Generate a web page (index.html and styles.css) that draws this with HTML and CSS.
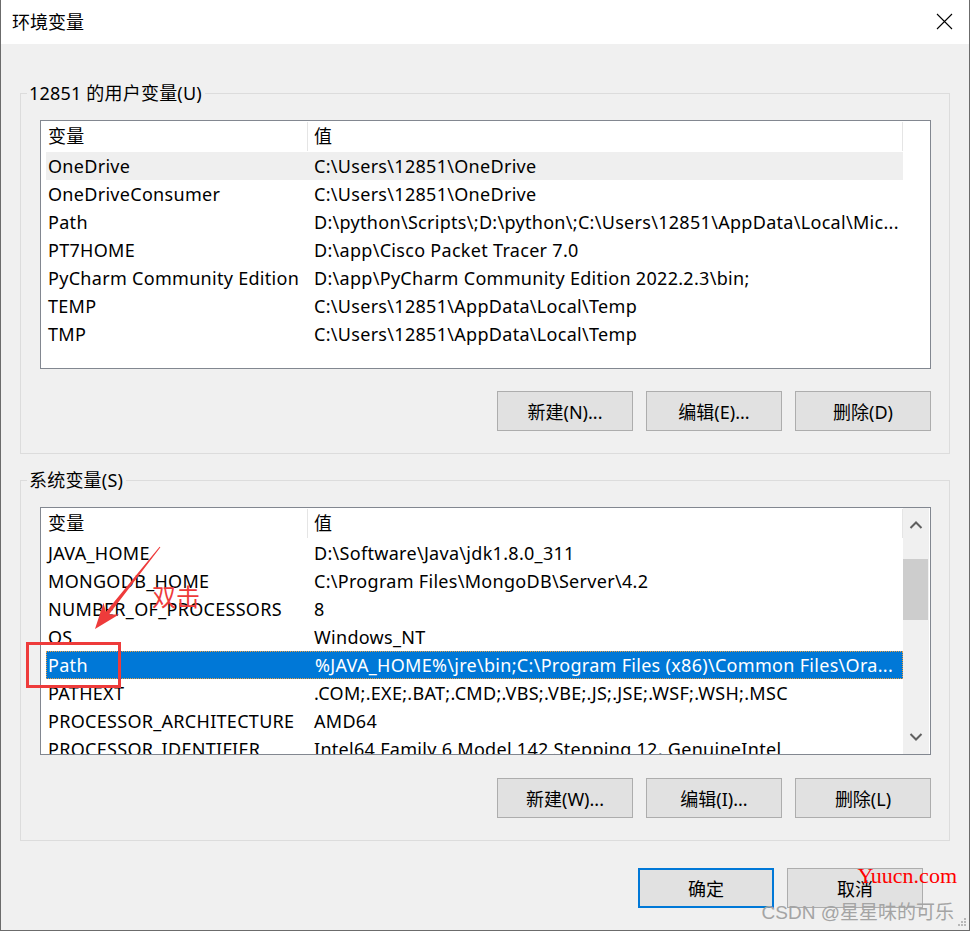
FILE: index.html
```html
<!DOCTYPE html>
<html lang="zh-CN">
<head>
    <meta charset="UTF-8">
    <meta name="viewport" content="width=device-width, initial-scale=1.0">
    <title>环境变量</title>
    <link rel="stylesheet" href="styles.css">
</head>
<body>
    <div class="window">
        <div class="titlebar">
            <span class="title">环境变量</span>
            <svg class="close" width="17" height="17" viewBox="0 0 17 17">
                <path d="M1 1 L16 16 M16 1 L1 16" stroke="#000" stroke-width="1.1" fill="none"/>
            </svg>
        </div>

        <div class="dialog">
            <section class="group">
                <div class="group-title">12851 的用户变量(U)</div>
                <div class="list list-user">
                    <div class="list-main">
                        <div class="row head"><span class="name">变量</span><span class="value">值</span></div>
                        <div class="row inactive"><span class="name">OneDrive</span><span class="value">C:\Users\12851\OneDrive</span></div>
                        <div class="row"><span class="name">OneDriveConsumer</span><span class="value">C:\Users\12851\OneDrive</span></div>
                        <div class="row"><span class="name">Path</span><span class="value">D:\python\Scripts\;D:\python\;C:\Users\12851\AppData\Local\Mic...</span></div>
                        <div class="row"><span class="name">PT7HOME</span><span class="value">D:\app\Cisco Packet Tracer 7.0</span></div>
                        <div class="row"><span class="name">PyCharm Community Edition</span><span class="value">D:\app\PyCharm Community Edition 2022.2.3\bin;</span></div>
                        <div class="row"><span class="name">TEMP</span><span class="value">C:\Users\12851\AppData\Local\Temp</span></div>
                        <div class="row"><span class="name">TMP</span><span class="value">C:\Users\12851\AppData\Local\Temp</span></div>
                    </div>
                    <div class="list-side"></div>
                </div>
                <div class="buttons">
                    <button class="btn">新建(N)...</button>
                    <button class="btn">编辑(E)...</button>
                    <button class="btn">删除(D)</button>
                </div>
            </section>

            <section class="group group-system">
                <div class="group-title">系统变量(S)</div>
                <div class="list list-system">
                    <div class="list-main">
                        <div class="row head"><span class="name">变量</span><span class="value">值</span></div>
                        <div class="row"><span class="name">JAVA_HOME</span><span class="value">D:\Software\Java\jdk1.8.0_311</span></div>
                        <div class="row"><span class="name">MONGODB_HOME</span><span class="value">C:\Program Files\MongoDB\Server\4.2</span></div>
                        <div class="row"><span class="name">NUMBER_OF_PROCESSORS</span><span class="value">8</span></div>
                        <div class="row"><span class="name">OS</span><span class="value">Windows_NT</span></div>
                        <div class="row selected"><span class="name">Path</span><span class="value">%JAVA_HOME%\jre\bin;C:\Program Files (x86)\Common Files\Ora...</span></div>
                        <div class="row"><span class="name">PATHEXT</span><span class="value">.COM;.EXE;.BAT;.CMD;.VBS;.VBE;.JS;.JSE;.WSF;.WSH;.MSC</span></div>
                        <div class="row"><span class="name">PROCESSOR_ARCHITECTURE</span><span class="value">AMD64</span></div>
                        <div class="row"><span class="name">PROCESSOR_IDENTIFIER</span><span class="value">Intel64 Family 6 Model 142 Stepping 12, GenuineIntel</span></div>
                    </div>
                    <div class="scrollbar">
                        <svg class="sb-arrow" width="14" height="10" viewBox="0 0 14 10"><path d="M1.5 8 L7 2.5 L12.5 8" stroke="#606060" stroke-width="2" fill="none"/></svg>
                        <div class="sb-track"><div class="sb-thumb"></div></div>
                        <svg class="sb-arrow" width="14" height="10" viewBox="0 0 14 10"><path d="M1.5 2 L7 7.5 L12.5 2" stroke="#606060" stroke-width="2" fill="none"/></svg>
                    </div>
                </div>
                <div class="buttons">
                    <button class="btn">新建(W)...</button>
                    <button class="btn">编辑(I)...</button>
                    <button class="btn">删除(L)</button>
                </div>
            </section>

            <div class="dialog-buttons">
                <button class="btn btn-default">确定</button>
                <button class="btn">取消</button>
            </div>
        </div>

        <svg class="annotation" width="970" height="931" viewBox="0 0 970 931">
            <rect x="27.5" y="643.5" width="92" height="43" fill="none" stroke="#ee3b3b" stroke-width="3"/>
            <polygon fill="#ee3b3b" points="160.4,547.3 159.6,546.7 105.8,612.1 103.6,602.8 95,629 119,614.5 109,614.5"/>
            <text x="152" y="606" class="note">双击</text>
        </svg>

        <div class="watermark">
            <span class="wm-site">Yuucn.com</span>
            <span class="wm-csdn">CSDN @星星味的可乐</span>
        </div>
        <svg class="grip" width="10" height="10" viewBox="0 0 10 10">
            <rect x="7" y="1" width="2" height="2" fill="#b8b8b8"/>
            <rect x="4" y="4" width="2" height="2" fill="#b8b8b8"/>
            <rect x="7" y="4" width="2" height="2" fill="#b8b8b8"/>
            <rect x="1" y="7" width="2" height="2" fill="#b8b8b8"/>
            <rect x="4" y="7" width="2" height="2" fill="#b8b8b8"/>
            <rect x="7" y="7" width="2" height="2" fill="#b8b8b8"/>
        </svg>
    </div>
</body>
</html>
```

FILE: styles.css
```css
body {
    margin: 0;
    background-color: #f0f0f0;
    font-family: "Noto Sans", "Noto Sans CJK SC", sans-serif;
    font-size: 18px;
    color: #000;
}
.window {
    position: relative;
    width: 970px;
    height: 931px;
    box-sizing: border-box;
    border-left: 1px solid #6b6b6b;
    border-right: 1px solid #6b6b6b;
    border-bottom: 1px solid #6b6b6b;
    background-color: #f0f0f0;
    overflow: hidden;
}
.titlebar {
    height: 44px;
    background-color: #fff;
    display: flex;
    align-items: center;
    justify-content: space-between;
    padding: 0 16px 0 11px;
}
.title {
    font-size: 18px;
    line-height: 22px;
}
.close {
    display: block;
    margin-top: -1px;
}
.dialog {
    display: flex;
    flex-direction: column;
    padding-top: 49px;
}
.group {
    margin: 0 19px;
    border: 1px solid #dcdcdc;
    padding: 0 18px 22px 19px;
}
.group-system {
    margin-top: 26px;
}
.group-title {
    width: fit-content;
    margin: -12px 0 0 -13px;
    padding: 0 3px 0 2px;
    background-color: #f0f0f0;
    font-size: 18px;
    line-height: 22px;
    letter-spacing: 0.2px;
}
.list {
    margin-top: 16px;
    border: 1px solid #828790;
    background-color: #fff;
    display: flex;
    overflow: hidden;
}
.list-user {
    height: 249px;
    box-sizing: border-box;
}
.list-system {
    height: 248px;
    box-sizing: border-box;
}
.list-main {
    flex: 1;
    padding-left: 5px;
    min-width: 0;
}
.list-side {
    width: 27px;
}
.row {
    display: flex;
    height: 28px;
    line-height: 28px;
    white-space: nowrap;
    letter-spacing: 0.3px;
}
.row .name {
    width: 262px;
    box-sizing: border-box;
    padding-left: 2px;
    overflow: hidden;
    flex-shrink: 0;
}
.row .value {
    flex: 1;
    padding-left: 6px;
    overflow: hidden;
}
.row.head {
    height: 31px;
    line-height: 31px;
}
.row.head .name,
.row.head .value {
    border-right: 1px solid #e5e5e5;
    margin: 1px 0;
    line-height: 29px;
}
.row.inactive {
    background-color: #efefef;
}
.row.selected {
    background-color: #0078d7;
    color: #fff;
    box-sizing: border-box;
    border: 1px dotted #f0a040;
    line-height: 26px;
}
.row.selected .name {
    padding-left: 1px;
}
.scrollbar {
    width: 26px;
    margin-right: 1px;
    background-color: #f0f0f0;
    display: flex;
    flex-direction: column;
    align-items: center;
}
.sb-arrow {
    display: block;
    margin: 12px 0;
}
.sb-track {
    flex: 1;
    align-self: stretch;
    padding-top: 17px;
}
.sb-thumb {
    height: 61px;
    margin-right: 1px;
    background-color: #cdcdcd;
}
.buttons {
    display: flex;
    justify-content: flex-end;
    gap: 13px;
    margin-top: 22px;
}
.list-system + .buttons {
    margin-top: 23px;
}
.btn {
    width: 136px;
    height: 40px;
    box-sizing: border-box;
    border: 1px solid #adadad;
    background-color: #e1e1e1;
    font-family: "Noto Sans", "Noto Sans CJK SC", sans-serif;
    font-size: 18px;
    color: #000;
    padding: 0;
}
.dialog-buttons {
    display: flex;
    justify-content: flex-end;
    gap: 13px;
    margin-top: 27px;
    padding-right: 46px;
}
.btn-default {
    border: 2px solid #0078d7;
}
.annotation {
    position: absolute;
    left: -1px;
    top: 0;
    pointer-events: none;
}
.note {
    font-family: "Noto Sans CJK SC", sans-serif;
    font-size: 24px;
    fill: #ee3b3b;
}
.watermark {
    position: absolute;
    right: 11px;
    bottom: 6px;
    display: flex;
    flex-direction: column;
    align-items: flex-end;
    gap: 15px;
    pointer-events: none;
}
.wm-site {
    font-family: "Liberation Serif", serif;
    font-size: 22px;
    line-height: 22px;
    color: #ff0000;
    margin-right: 1px;
}
.wm-csdn {
    font-family: "Liberation Sans", "Noto Sans CJK SC", sans-serif;
    font-size: 19px;
    line-height: 22px;
    color: #a4a4a4;
    margin-right: 4px;
}
.grip {
    position: absolute;
    right: 2px;
    bottom: 3px;
}
```
